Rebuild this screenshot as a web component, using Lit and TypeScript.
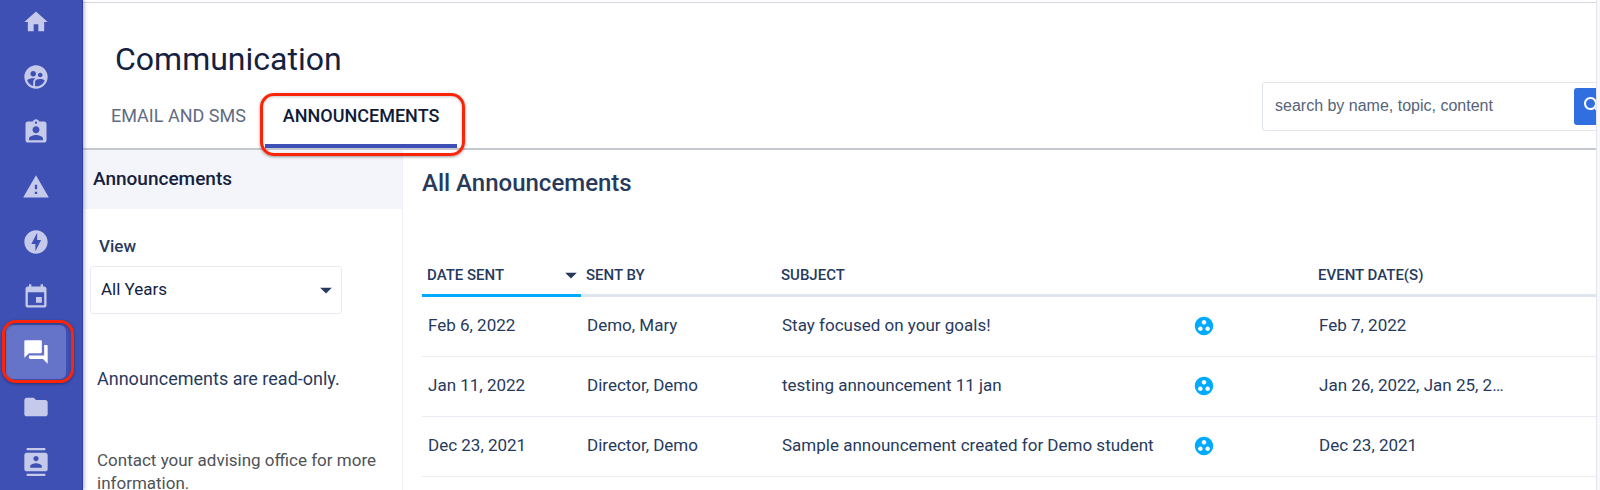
import { LitElement, html, css, svg } from "lit";
import { customElement, property, state } from "lit/decorators.js";
import { classMap } from "lit/directives/class-map.js";

const ICONS: Record<string, string> = {
  home: "M10 20v-6h4v6h5v-8h3L12 3 2 12h3v8z",
  advisors:
    "M12 2C6.48 2 2 6.48 2 12s4.48 10 10 10 10-4.48 10-10S17.52 2 12 2zm3.61 6.34c1.07 0 1.93.86 1.93 1.93s-.86 1.93-1.93 1.93-1.93-.86-1.93-1.93c-.01-1.07.86-1.93 1.93-1.93zm-6-1.58c1.3 0 2.36 1.06 2.36 2.36s-1.06 2.36-2.36 2.36-2.36-1.06-2.36-2.36c0-1.31 1.05-2.36 2.36-2.36zm0 9.13v3.75c-2.4-.75-4.3-2.6-5.14-4.96 1.05-1.12 3.67-1.69 5.14-1.69.53 0 1.2.08 1.9.22-1.64.87-1.9 2.02-1.9 2.68zM12 20c-.27 0-.53-.01-.79-.04v-4.07c0-1.42 2.94-2.13 4.4-2.13 1.07 0 2.92.39 3.84 1.15C18.28 17.88 15.39 20 12 20z",
  profile:
    "M19 3h-4.18C14.4 1.84 13.3 1 12 1c-1.3 0-2.4.84-2.82 2H5c-1.1 0-2 .9-2 2v14c0 1.1.9 2 2 2h14c1.1 0 2-.9 2-2V5c0-1.1-.9-2-2-2zm-7 0c.55 0 1 .45 1 1s-.45 1-1 1-1-.45-1-1 .45-1 1-1zm0 4c1.66 0 3 1.34 3 3s-1.34 3-3 3-3-1.34-3-3 1.34-3 3-3zm6 12H6v-1.4c0-2 4-3.1 6-3.1s6 1.1 6 3.1V19z",
  alerts: "M1 21h22L12 2 1 21zm12-3h-2v-2h2v2zm0-4h-2v-4h2v4z",
  actions:
    "M12 2.02c-5.51 0-9.98 4.47-9.98 9.98s4.47 9.98 9.98 9.98 9.98-4.47 9.98-9.98S17.51 2.02 12 2.02zM11.48 20v-6.26H8L13 4v6.26h3.35L11.48 20z",
  calendar:
    "M17 12h-5v5h5v-5zM16 1v2H8V1H6v2H5c-1.11 0-1.99.9-1.99 2L3 19c0 1.1.89 2 2 2h14c1.1 0 2-.9 2-2V5c0-1.1-.9-2-2-2h-1V1h-2zm3 18H5V8h14v11z",
  communication:
    "M21 6h-2v9H6v2c0 .55.45 1 1 1h11l4 4V7c0-.55-.45-1-1-1zm-4 6V3c0-.55-.45-1-1-1H3c-.55 0-1 .45-1 1v14l4-4h10c.55 0 1-.45 1-1z",
  files:
    "M10 4H4c-1.1 0-1.99.9-1.99 2L2 18c0 1.1.9 2 2 2h16c1.1 0 2-.9 2-2V8c0-1.1-.9-2-2-2h-8l-2-2z",
  contacts:
    "M20 0H4v2h16V0zM4 24h16v-2H4v2zM20 4H4c-1.1 0-2 .9-2 2v12c0 1.1.9 2 2 2h16c1.1 0 2-.9 2-2V6c0-1.1-.9-2-2-2zm-8 2.75c1.24 0 2.25 1.01 2.25 2.25s-1.01 2.25-2.25 2.25S9.75 10.24 9.75 9 10.76 6.75 12 6.75zM17 17H7v-1.5c0-1.67 3.33-2.5 5-2.5s5 .83 5 2.5V17z",
  group:
    "M12 2C6.48 2 2 6.48 2 12s4.48 10 10 10 10-4.48 10-10S17.52 2 12 2zM8 17.5c-1.38 0-2.5-1.12-2.5-2.5s1.12-2.5 2.5-2.5 2.5 1.12 2.5 2.5-1.12 2.5-2.5 2.5zM9.5 8c0-1.38 1.12-2.5 2.5-2.5s2.5 1.12 2.5 2.5-1.12 2.5-2.5 2.5S9.5 9.38 9.5 8zm6.5 9.5c-1.38 0-2.5-1.12-2.5-2.5s1.12-2.5 2.5-2.5 2.5 1.12 2.5 2.5-1.12 2.5-2.5 2.5z",
  search:
    "M15.5 14h-.79l-.28-.27C15.41 12.59 16 11.11 16 9.5 16 5.91 13.09 3 9.5 3S3 5.91 3 9.5 5.91 16 9.5 16c1.61 0 3.09-.59 4.23-1.57l.27.28v.79l5 4.99L20.49 19l-4.99-5zm-6 0C7.01 14 5 11.99 5 9.5S7.01 5 9.5 5 14 7.01 14 9.5 11.99 14 9.5 14z",
  down: "M2 8h20L12 18z",
};

@customElement("app-icon")
class AppIcon extends LitElement {
  @property() name = "home";

  static styles = css`
    :host {
      display: inline-flex;
      width: 28px;
      height: 28px;
    }
    .glyph {
      width: 100%;
      height: 100%;
      fill: currentColor;
    }
  `;

  render() {
    return html`<svg class="glyph" viewBox="0 0 24 24" aria-hidden="true">
      ${svg`<path d=${ICONS[this.name]}></path>`}
    </svg>`;
  }
}

@customElement("side-nav")
class SideNav extends LitElement {
  @property() current = "communication";

  static styles = css`
    :host {
      display: block;
      background: #3f50b5;
      border-right: 1px solid #2f3ea6;
      box-shadow: 1px 0 4px rgba(40, 45, 90, 0.4);
      box-sizing: border-box;
    }
    .list {
      display: flex;
      flex-direction: column;
      gap: 1px;
      margin: -5px 0 0;
      padding: 0 16px 0 6px;
      list-style: none;
    }
    .item {
      position: relative;
    }
    .link {
      display: flex;
      align-items: center;
      justify-content: center;
      height: 54px;
      border-radius: 6px;
      color: #c5caea;
    }
    .link.active {
      background: #6573c9;
      color: #fff;
    }
    .ring {
      position: absolute;
      inset: -5px -8px -4px -4px;
      border: 3px solid #fb2409;
      border-radius: 14px;
      box-shadow: 0 1px 3px rgba(0, 0, 0, 0.4),
        inset 0 1px 3px rgba(0, 0, 0, 0.3);
      pointer-events: none;
    }
  `;

  render() {
    const names = [
      "home",
      "advisors",
      "profile",
      "alerts",
      "actions",
      "calendar",
      "communication",
      "files",
      "contacts",
    ];
    return html`<nav aria-label="Main">
      <ul class="list">
        ${names.map(
          (n) => html`<li class="item">
            <a
              class=${classMap({ link: true, active: n === this.current })}
              href="#${n}"
              aria-label=${n}
              ><app-icon name=${n}></app-icon
            ></a>
            ${n === this.current ? html`<span class="ring"></span>` : ""}
          </li>`
        )}
      </ul>
    </nav>`;
  }
}

@customElement("announcement-table")
class AnnouncementTable extends LitElement {
  @state() rows = [
    ["Feb 6, 2022", "Demo, Mary", "Stay focused on your goals!", "Feb 7, 2022"],
    [
      "Jan 11, 2022",
      "Director, Demo",
      "testing announcement 11 jan",
      "Jan 26, 2022, Jan 25, 2022",
    ],
    [
      "Dec 23, 2021",
      "Director, Demo",
      "Sample announcement created for Demo student",
      "Dec 23, 2021",
    ],
  ];

  static styles = css`
    :host {
      display: block;
    }
    .table {
      width: 100%;
      table-layout: fixed;
      border-collapse: separate;
      border-spacing: 0;
      color: #273a5d;
      font-size: 17px;
      line-height: 24px;
    }
    .date {
      width: 159px;
    }
    .sender {
      width: 195px;
    }
    .kind {
      width: 126px;
    }
    .event {
      width: 192px;
    }
    .rest {
      width: 91px;
    }
    .head {
      height: 38px;
      padding: 2px 0 0 5px;
      border-bottom: 3px solid #dfe5ef;
      text-align: left;
      font-size: 15px;
      font-weight: 500;
      vertical-align: middle;
    }
    .head.sorted {
      border-bottom-color: #00aaff;
    }
    .sort {
      display: flex;
      align-items: center;
      justify-content: space-between;
      width: 100%;
      padding: 0 3px 0 0;
      border: 0;
      background: none;
      color: inherit;
      font: inherit;
    }
    .arrow {
      width: 14px;
      height: 14px;
    }
    .cell {
      height: 55px;
      padding: 0 0 4px 6px;
      border-bottom: 1px solid #eaecf4;
      overflow: hidden;
      text-overflow: ellipsis;
      white-space: nowrap;
    }
    .group {
      width: 22px;
      height: 22px;
      color: #00aaff;
      vertical-align: middle;
    }
  `;

  render() {
    return html`<table class="table">
      <colgroup>
        <col class="date" />
        <col class="sender" />
        <col />
        <col class="kind" />
        <col class="event" />
        <col class="rest" />
      </colgroup>
      <thead>
        <tr>
          <th class="head sorted" aria-sort="descending">
            <button class="sort">
              DATE SENT<app-icon class="arrow" name="down"></app-icon>
            </button>
          </th>
          <th class="head">SENT BY</th>
          <th class="head">SUBJECT</th>
          <td class="head"></td>
          <th class="head">EVENT DATE(S)</th>
          <td class="head"></td>
        </tr>
      </thead>
      <tbody>
        ${this.rows.map(
          ([date, sender, subject, event]) => html`<tr>
            <td class="cell">${date}</td>
            <td class="cell">${sender}</td>
            <td class="cell">${subject}</td>
            <td class="cell"><app-icon class="group" name="group"></app-icon></td>
            <td class="cell">${event}</td>
            <td class="cell"></td>
          </tr>`
        )}
      </tbody>
    </table>`;
  }
}

@customElement("app-root")
class AppRoot extends LitElement {
  static styles = css`
    :host {
      display: grid;
      grid-template-columns: 83px minmax(0, 1fr);
      height: 100vh;
      overflow: hidden;
      box-sizing: border-box;
      padding-right: 3px;
      background: #f8f8fb;
      font-family: Roboto, "Liberation Sans", sans-serif;
      color: #273a5d;
    }
    .nav {
      z-index: 1;
    }
    .page {
      display: flex;
      flex-direction: column;
      background: #fff;
      border-right: 1px solid #e4e5ec;
      overflow: hidden;
    }
    .header {
      display: flex;
      justify-content: space-between;
      flex: none;
      margin-top: 2px;
      border-top: 1px solid #d5d8e3;
      border-bottom: 2px solid #c6c8d0;
    }
    .title {
      margin: 0;
      padding: 36px 0 0 32px;
      font-size: 32px;
      line-height: 40px;
      font-weight: 400;
      color: #14213f;
    }
    .tabs {
      display: flex;
      gap: 1px;
      padding: 15px 0 0 10px;
    }
    .tab {
      position: relative;
      box-sizing: border-box;
      height: 54px;
      padding: 0 18px 6px;
      border: 0;
      border-bottom: 4px solid transparent;
      background: none;
      color: #5f6c82;
      font: 400 18px/24px Roboto, sans-serif;
    }
    .tab.active {
      border-bottom-color: #3f4fb8;
      color: #0f1b38;
      font-weight: 500;
    }
    .ring {
      position: absolute;
      inset: -1px -8px -12px -5px;
      border: 3px solid #fb2409;
      border-radius: 14px;
      box-shadow: 0 1px 3px rgba(0, 0, 0, 0.4),
        inset 0 1px 3px rgba(0, 0, 0, 0.2);
      pointer-events: none;
    }
    .search {
      display: flex;
      align-items: flex-start;
      flex: none;
      box-sizing: border-box;
      width: 356px;
      height: 49px;
      margin: 79px -22px 0 0;
      padding: 5px;
      border: 1px solid #e0e5ee;
      border-radius: 3px;
    }
    .query {
      flex: 1;
      min-width: 0;
      height: 36px;
      padding: 0 7px;
      border: 0;
      outline: 0;
      background: none;
      color: #56637a;
      font: 16px/24px "Liberation Sans", sans-serif;
    }
    .query::placeholder {
      color: #56637a;
    }
    .go {
      display: flex;
      align-items: center;
      justify-content: center;
      width: 38px;
      height: 37px;
      padding: 0 0 1px;
      border: 0;
      border-radius: 3px;
      background: #316fe0;
      color: #fff;
    }
    .go-icon {
      width: 24px;
      height: 24px;
    }
    .body {
      display: grid;
      grid-template-columns: 320px minmax(0, 1fr);
      flex: 1;
    }
    .side {
      box-sizing: border-box;
      border-right: 1px solid #eff0f5;
    }
    .side-title {
      margin: 0;
      padding: 17px 10px 18px;
      background: #f4f5fa;
      color: #14213f;
      font-size: 19px;
      line-height: 24px;
      font-weight: 500;
    }
    .filter {
      display: flex;
      flex-direction: column;
      gap: 8px;
      padding: 25px 60px 0 7px;
    }
    .label {
      padding-left: 9px;
      font-size: 17px;
      line-height: 24px;
      font-weight: 500;
    }
    .pick {
      display: grid;
      align-items: center;
    }
    .select {
      grid-area: 1 / 1;
      appearance: none;
      width: 100%;
      height: 48px;
      padding: 0 32px 2px 10px;
      border: 1px solid #e8ebf3;
      border-radius: 3px;
      background: #fff;
      color: #14213f;
      font: 17px/24px Roboto, sans-serif;
    }
    .pick-arrow {
      grid-area: 1 / 1;
      justify-self: end;
      width: 14px;
      height: 14px;
      margin-right: 9px;
      pointer-events: none;
    }
    .note {
      margin: 0;
      padding: 53px 14px 0;
      font-size: 18px;
      line-height: 24px;
    }
    .help {
      margin: 0;
      padding: 58px 14px 0;
      color: #505257;
      font-size: 17px;
      line-height: 23px;
    }
    .content {
      padding: 17px 0 0 19px;
    }
    .heading {
      margin: 0 0 55px;
      font-size: 24px;
      line-height: 32px;
      font-weight: 500;
    }
  `;

  render() {
    return html`
      <side-nav class="nav"></side-nav>
      <div class="page">
        <header class="header">
          <div>
            <h1 class="title">Communication</h1>
            <div class="tabs" role="tablist">
              <button class="tab" role="tab">EMAIL AND SMS</button>
              <button class="tab active" role="tab" aria-selected="true">
                ANNOUNCEMENTS<span class="ring"></span>
              </button>
            </div>
          </div>
          <div class="search">
            <input
              class="query"
              type="text"
              aria-label="search"
              placeholder="search by name, topic, content"
            />
            <button class="go" aria-label="search">
              <app-icon class="go-icon" name="search"></app-icon>
            </button>
          </div>
        </header>
        <div class="body">
          <aside class="side">
            <h2 class="side-title">Announcements</h2>
            <div class="filter">
              <label class="label" for="years">View</label>
              <div class="pick">
                <select class="select" id="years">
                  <option>All Years</option>
                </select>
                <app-icon class="pick-arrow" name="down"></app-icon>
              </div>
            </div>
            <p class="note">Announcements are read-only.</p>
            <p class="help">
              Contact your advising office for more information.
            </p>
          </aside>
          <main class="content">
            <h2 class="heading">All Announcements</h2>
            <announcement-table></announcement-table>
          </main>
        </div>
      </div>
    `;
  }
}
